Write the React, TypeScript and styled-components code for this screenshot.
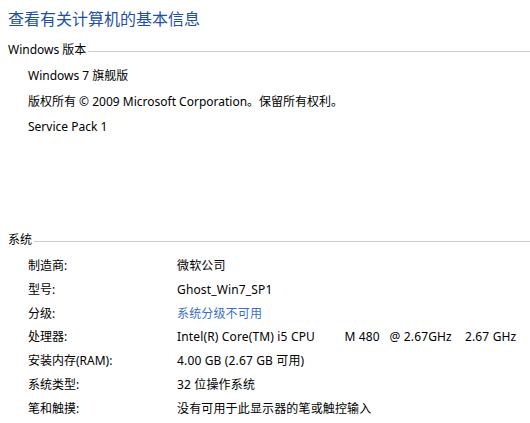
import React from "react";
import styled, { createGlobalStyle } from "styled-components";

const Global = createGlobalStyle`
  html, body { margin: 0; padding: 0; background: #fff; }
  body { font-family: "Noto Sans", "Noto Sans CJK SC", sans-serif; font-size: 12px; color: #000; }
`;

const Page = styled.div`
  width: 530px;
  height: 423px;
  overflow: hidden;
  padding-left: 8px;
  box-sizing: border-box;
`;

const Title = styled.h1`
  margin: 0;
  padding-top: 6px;
  font-family: "Noto Sans CJK SC", sans-serif;
  font-weight: 400;
  font-size: 16px;
  line-height: 24px;
  color: #1e50a8;
`;

const Section = styled.section<{ $top: number; $minH?: number }>`
  margin-top: ${(p) => p.$top}px;
  min-height: ${(p) => p.$minH ?? 0}px;
`;

const Header = styled.div`
  display: flex;
  align-items: center;
  height: 16px;
  line-height: 16px;
`;

const HeaderText = styled.span`
  font-family: "Noto Sans", "Noto Sans CJK SC", sans-serif;
  padding-right: 2px;
`;

const Rule = styled.div`
  flex: 1;
  height: 1px;
  background: #cccccc;
  margin-top: 3px;
`;

const List = styled.div<{ $top: number }>`
  padding-left: 20px;
  margin-top: ${(p) => p.$top}px;
`;

const Line = styled.div<{ $h: number }>`
  line-height: ${(p) => p.$h}px;
  height: ${(p) => p.$h}px;
  white-space: pre;
`;

const Row = styled.div`
  display: grid;
  grid-template-columns: 149px 1fr;
  line-height: 23.8px;
  height: 23.8px;
  white-space: pre;
`;

const Value = styled.span<{ $link?: boolean }>`
  color: ${(p) => (p.$link ? "#3a6fc4" : "#000")};
  letter-spacing: 0.15px;
`;

const rows: [string, string, boolean?][] = [
  ["制造商:", "微软公司"],
  ["型号:", "Ghost_Win7_SP1"],
  ["分级:", "系统分级不可用", true],
  ["处理器:", "Intel(R) Core(TM) i5 CPU         M 480   @ 2.67GHz    2.67 GHz"],
  ["安装内存(RAM):", "4.00 GB (2.67 GB 可用)"],
  ["系统类型:", "32 位操作系统"],
  ["笔和触摸:", "没有可用于此显示器的笔或触控输入"],
];

export default function App() {
  return (
    <Page>
      <Global />
      <Title>查看有关计算机的基本信息</Title>
      <Section $top={12} $minH={190}>
        <Header>
          <HeaderText>Windows 版本</HeaderText>
          <Rule />
        </Header>
        <List $top={5}>
          <Line $h={25.5}>Windows 7 旗舰版</Line>
          <Line $h={25.5}>版权所有 © 2009 Microsoft Corporation。保留所有权利。</Line>
          <Line $h={25.5}>Service Pack 1</Line>
        </List>
      </Section>
      <Section $top={0}>
        <Header>
          <HeaderText>系统</HeaderText>
          <Rule />
        </Header>
        <List $top={6}>
          {rows.map(([k, v, link]) => (
            <Row key={k}>
              <span>{k}</span>
              <Value $link={link}>{v}</Value>
            </Row>
          ))}
        </List>
      </Section>
    </Page>
  );
}
